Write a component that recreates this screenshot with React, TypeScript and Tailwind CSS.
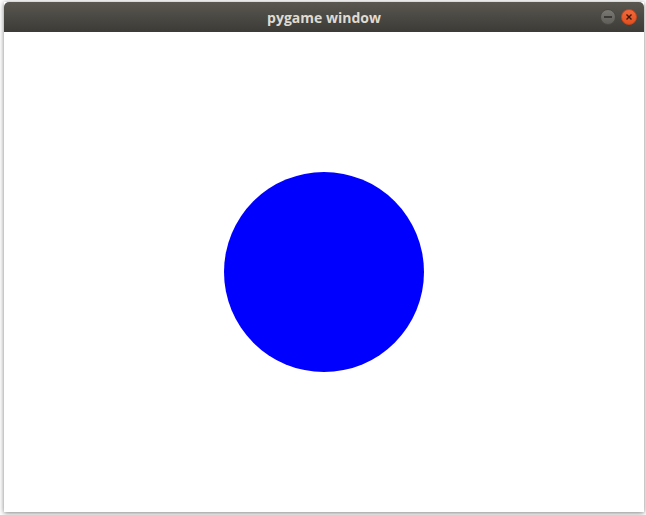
import React from "react";

const TitleBar = () => {
  return (
    <div className="relative flex h-[30px] items-center justify-center rounded-t-[5px] bg-gradient-to-b from-[#5a5750] to-[#3c3b37]">
      <span
        className="text-[14px] font-bold text-[#dfdbd2]"
        style={{ fontFamily: '"Open Sans", "Noto Sans", sans-serif' }}
      >
        pygame window
      </span>
      <div className="absolute right-[7px] top-[7px] flex items-center gap-[5px]">
        <div className="flex h-[16px] w-[16px] items-center justify-center rounded-full border border-[#4a4944] bg-gradient-to-b from-[#7a7872] to-[#5f5e59]">
          <div className="h-[1.5px] w-[8px] bg-[#3a3935]" />
        </div>
        <div className="flex h-[16px] w-[16px] items-center justify-center rounded-full border border-[#c8461c] bg-gradient-to-b from-[#f2683b] to-[#e2501f]">
          <svg width="8" height="8" viewBox="0 0 8 8">
            <path d="M1.5 1.5 L6.5 6.5 M6.5 1.5 L1.5 6.5" stroke="#3b1a0d" strokeWidth="1.4" />
          </svg>
        </div>
      </div>
    </div>
  );
};

const App = () => {
  return (
    <div className="h-[515px] w-[646px] bg-white pl-[4px] pt-[2px]">
      <div className="w-[640px] shadow-[0_1px_5px_rgba(0,0,0,0.5)]">
        <TitleBar />
        <div className="flex h-[480px] w-[640px] items-center justify-center bg-white">
          <div className="h-[200px] w-[200px] rounded-full bg-[#0000ff]" />
        </div>
      </div>
    </div>
  );
};

export default App;
